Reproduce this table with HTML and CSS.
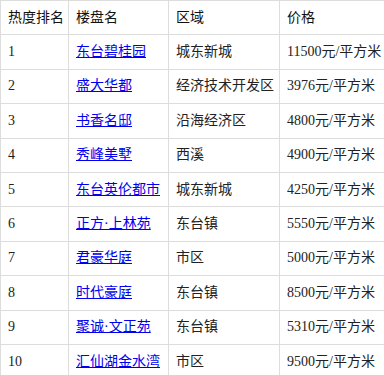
FILE: index.html
```html
<!DOCTYPE html>
<html lang="zh">
<head>
<meta charset="utf-8">
<link rel="stylesheet" href="styles.css">
</head>
<body>
<table class="rank">
  <colgroup>
    <col class="c1"><col class="c2"><col class="c3"><col class="c4">
  </colgroup>
  <thead>
    <tr><th>热度排名</th><th>楼盘名</th><th>区域</th><th>价格</th></tr>
  </thead>
  <tbody>
    <tr><td>1</td><td><a href="#">东台碧桂园</a></td><td>城东新城</td><td>11500元/平方米</td></tr>
    <tr><td>2</td><td><a href="#">盛大华都</a></td><td>经济技术开发区</td><td>3976元/平方米</td></tr>
    <tr><td>3</td><td><a href="#">书香名邸</a></td><td>沿海经济区</td><td>4800元/平方米</td></tr>
    <tr><td>4</td><td><a href="#">秀峰美墅</a></td><td>西溪</td><td>4900元/平方米</td></tr>
    <tr><td>5</td><td><a href="#">东台英伦都市</a></td><td>城东新城</td><td>4250元/平方米</td></tr>
    <tr><td>6</td><td><a href="#">正方·上林苑</a></td><td>东台镇</td><td>5550元/平方米</td></tr>
    <tr><td>7</td><td><a href="#">君豪华庭</a></td><td>市区</td><td>5000元/平方米</td></tr>
    <tr><td>8</td><td><a href="#">时代豪庭</a></td><td>东台镇</td><td>8500元/平方米</td></tr>
    <tr><td>9</td><td><a href="#">聚诚·文正苑</a></td><td>东台镇</td><td>5310元/平方米</td></tr>
    <tr><td>10</td><td><a href="#">汇仙湖金水湾</a></td><td>市区</td><td>9500元/平方米</td></tr>
  </tbody>
</table>
</body>
</html>
```

FILE: styles.css
```css
html, body {
  margin: 0;
  padding: 0;
  background: #fff;
}
body {
  font-family: "Liberation Serif", "Noto Sans CJK SC", serif;
  font-size: 14px;
  color: #222;
}
.rank {
  border-collapse: collapse;
  width: 384px;
  table-layout: fixed;
}
.c1 { width: 68px; }
.c2 { width: 100px; }
.c3 { width: 111px; }
.c4 { width: 105px; }
.rank th,
.rank td {
  border: 1px solid #ddd;
  padding: 6.6px 7px;
  line-height: 20.2px;
  text-align: left;
  font-weight: normal;
  white-space: nowrap;
}
.rank th {
  color: #111;
}
.rank a {
  color: #00e;
  text-decoration: underline;
}
```
